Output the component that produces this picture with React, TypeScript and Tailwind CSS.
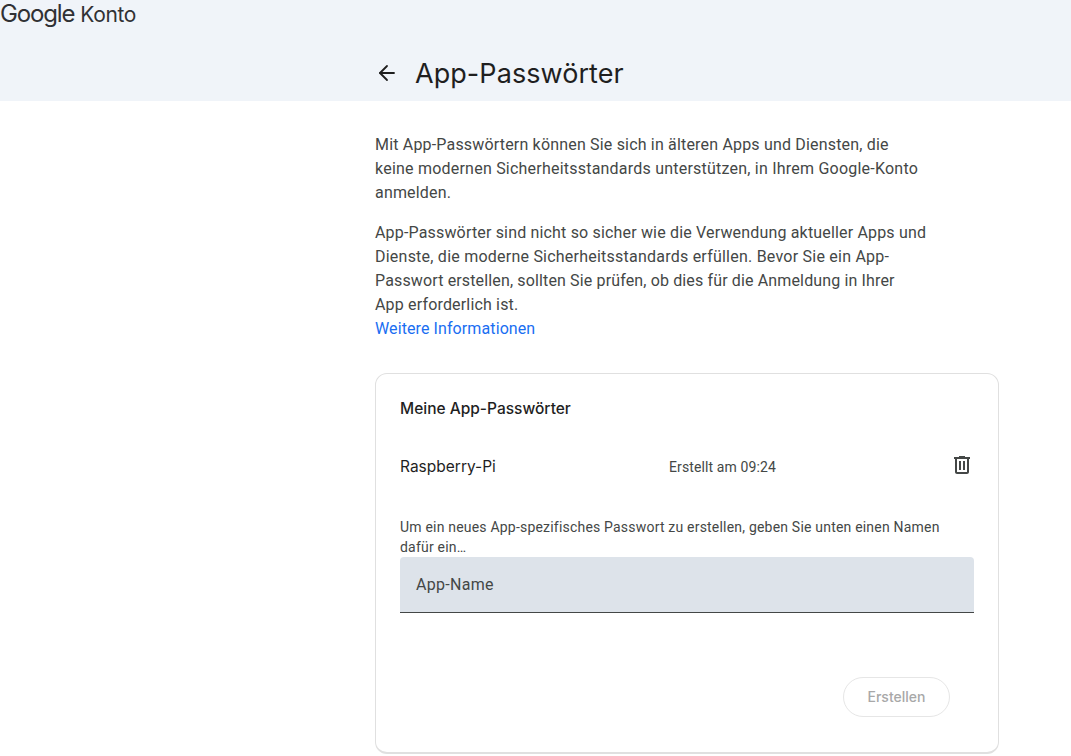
import { ArrowLeft } from "lucide-react";

function TrashIcon() {
  return (
    <svg width="24" height="24" viewBox="0 0 24 24" fill="#444746">
      <path d="M15 4V3H9v1H4v2h1v13c0 1.1.9 2 2 2h10c1.1 0 2-.9 2-2V6h1V4h-5zm2 15H7V6h10v13z" />
      <path d="M9 8h2v9H9zm4 0h2v9h-2z" />
    </svg>
  );
}

export default function App() {
  return (
    <div className="h-[756px] overflow-hidden bg-white font-['Roboto',sans-serif] text-[#444746]">
      <header className="h-[101px] bg-[#f0f4f9]">
        <div className="flex h-[28px] items-baseline font-['Inter',sans-serif] text-[#303134]">
          <span className="text-[24px] leading-[28px] font-normal tracking-[-1.15px]">Google</span>
          <span className="ml-[6px] text-[21px] leading-[28px] font-normal tracking-[-0.35px]">Konto</span>
        </div>
        <div className="mt-[20px] flex h-[50px] items-center pl-[375px]">
          <ArrowLeft size={24} strokeWidth={1.8} className="text-[#1f1f1f]" />
          <h1 className="ml-[16px] translate-y-[1px] font-['Inter',sans-serif] text-[27px] leading-[36px] font-normal tracking-[0.06px] text-[#1f1f1f]">
            App-Passwörter
          </h1>
        </div>
      </header>

      <main className="ml-[375px] w-[624px] pt-[32px]">
        <p className="text-[16px] leading-[24px] tracking-[0.18px]">
          Mit App-Passwörtern können Sie sich in älteren Apps und Diensten, die
          <br />
          <span className="tracking-[0.22px]">keine modernen Sicherheitsstandards unterstützen, in Ihrem Google-Konto</span>
          <br />
          anmelden.
        </p>
        <p className="mt-[16px] text-[16px] leading-[24px] tracking-[0.17px]">
          App-Passwörter sind nicht so sicher wie die Verwendung aktueller Apps und
          <br />
          <span className="tracking-[0.23px]">Dienste, die moderne Sicherheitsstandards erfüllen. Bevor Sie ein App-</span>
          <br />
          <span className="tracking-[0.14px]">Passwort erstellen, sollten Sie prüfen, ob dies für die Anmeldung in Ihrer</span>
          <br />
          App erforderlich ist.
        </p>
        <a className="block text-[16px] leading-[24px] tracking-[0.1px] text-[#1a6ef2]">Weitere Informationen</a>

        <section className="mt-[32px] h-[381px] rounded-[12px] border border-b-2 border-[#e0e0e0] px-[24px]">
          <h2 className="mt-[23px] font-['Inter',sans-serif] text-[15.5px] leading-[24px] font-medium text-[#1f1f1f]">
            Meine App-Passwörter
          </h2>
          <div className="mt-[34px] flex h-[24px] items-center">
            <span className="w-[269px] font-['Inter',sans-serif] text-[15.5px] leading-[24px] text-[#1f1f1f]">Raspberry-Pi</span>
            <span className="text-[14px] leading-[20px] tracking-[0.12px]">Erstellt am 09:24</span>
            <span className="ml-auto -translate-y-[2px]">
              <TrashIcon />
            </span>
          </div>
          <p className="mt-[38px] text-[14px] leading-[20px] tracking-[0.2px]">
            Um ein neues App-spezifisches Passwort zu erstellen, geben Sie unten einen Namen
            <br />
            dafür ein…
          </p>
          <div className="flex h-[56px] items-center rounded-t-[4px] border-b border-[#444746] bg-[#dde3ea] pl-[16px] text-[16px] tracking-[0.3px]">
            App-Name
          </div>
          <div className="mt-[64px] flex justify-end pr-[24px]">
            <button className="h-[40px] w-[107px] rounded-full border border-[#e6e6e6] pb-[2px] font-['Inter',sans-serif] text-[14px] font-medium text-[#a8a8a8]">
              Erstellen
            </button>
          </div>
        </section>
      </main>
    </div>
  );
}
